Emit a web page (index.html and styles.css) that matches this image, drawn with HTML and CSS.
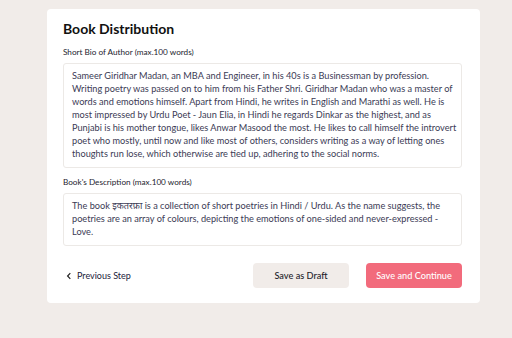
FILE: index.html
```html
<!DOCTYPE html>
<html>
<head>
<meta charset="utf-8">
<link rel="stylesheet" href="styles.css">
</head>
<body>
<div class="page">
  <div class="card">
    <h1 class="title">Book Distribution</h1>
    <div class="field">
      <div class="label">Short Bio of Author (max.100 words)</div>
      <div class="box">Sameer Giridhar Madan, an MBA and Engineer, in his 40s is a Businessman by profession.<br>Writing poetry was passed on to him from his Father Shri. Giridhar Madan who was a master of<br>words and emotions himself. Apart from Hindi, he writes in English and Marathi as well. He is<br>most impressed by Urdu Poet - Jaun Elia, in Hindi he regards Dinkar as the highest, and as<br>Punjabi is his mother tongue, likes Anwar Masood the most. He likes to call himself the introvert<br>poet who mostly, until now and like most of others, considers writing as a way of letting ones<br>thoughts run lose, which otherwise are tied up, adhering to the social norms.</div>
    </div>
    <div class="field">
      <div class="label">Book's Description (max.100 words)</div>
      <div class="box">The book इकतरफ़ा is a collection of short poetries in Hindi / Urdu. As the name suggests, the<br>poetries are an array of colours, depicting the emotions of one-sided and never-expressed -<br>Love.</div>
    </div>
    <div class="actions">
      <a class="back"><svg class="chev" width="6" height="8" viewBox="0 0 6 8"><path d="M4.3 1.2 L1.6 4 L4.3 6.8" fill="none" stroke="#222" stroke-width="1.2"/></svg>Previous Step</a>
      <div class="btns">
        <button class="btn draft">Save as Draft</button>
        <button class="btn primary">Save and Continue</button>
      </div>
    </div>
  </div>
</div>
</body>
</html>
```

FILE: styles.css
```css
html, body {
  margin: 0;
  padding: 0;
  background: #f1ece9;
  font-family: "Lato", "Noto Sans", sans-serif;
}
.page {
  padding: 9px 0 0 47px;
}
.card {
  width: 433px;
  height: 294px;
  box-sizing: border-box;
  background: #fff;
  border-radius: 4px;
  padding: 10px 18px 0 16px;
}
.title {
  margin: 0;
  font-size: 14px;
  font-weight: 700;
  color: #111;
  line-height: 19px;
}
.field {
  padding-top: 8px;
}
.label {
  font-size: 8.2px;
  color: #1c1c2e;
  line-height: 12px;
}
.box {
  margin-top: 5px;
  border: 1px solid #ece9e6;
  border-radius: 3px;
  padding: 5px 8px 7px 8px;
  font-size: 9.2px;
  line-height: 13px;
  color: #3b3b55;
  white-space: nowrap;
}
.actions {
  margin-top: 17px;
  display: flex;
  justify-content: space-between;
  align-items: center;
}
.back {
  display: flex;
  align-items: center;
  gap: 5px;
  font-size: 9px;
  color: #22223a;
  padding-left: 3px;
}
.btns {
  display: flex;
  gap: 17px;
}
.btn {
  height: 25px;
  border: none;
  border-radius: 4px;
  font-family: inherit;
  font-size: 9.2px;
  font-weight: 500;
  width: 96px;
  padding: 0;
}
.draft {
  background: #f1ece9;
  color: #1d1d2b;
}
.primary {
  background: #f26b7c;
  color: #fff;
}
```
